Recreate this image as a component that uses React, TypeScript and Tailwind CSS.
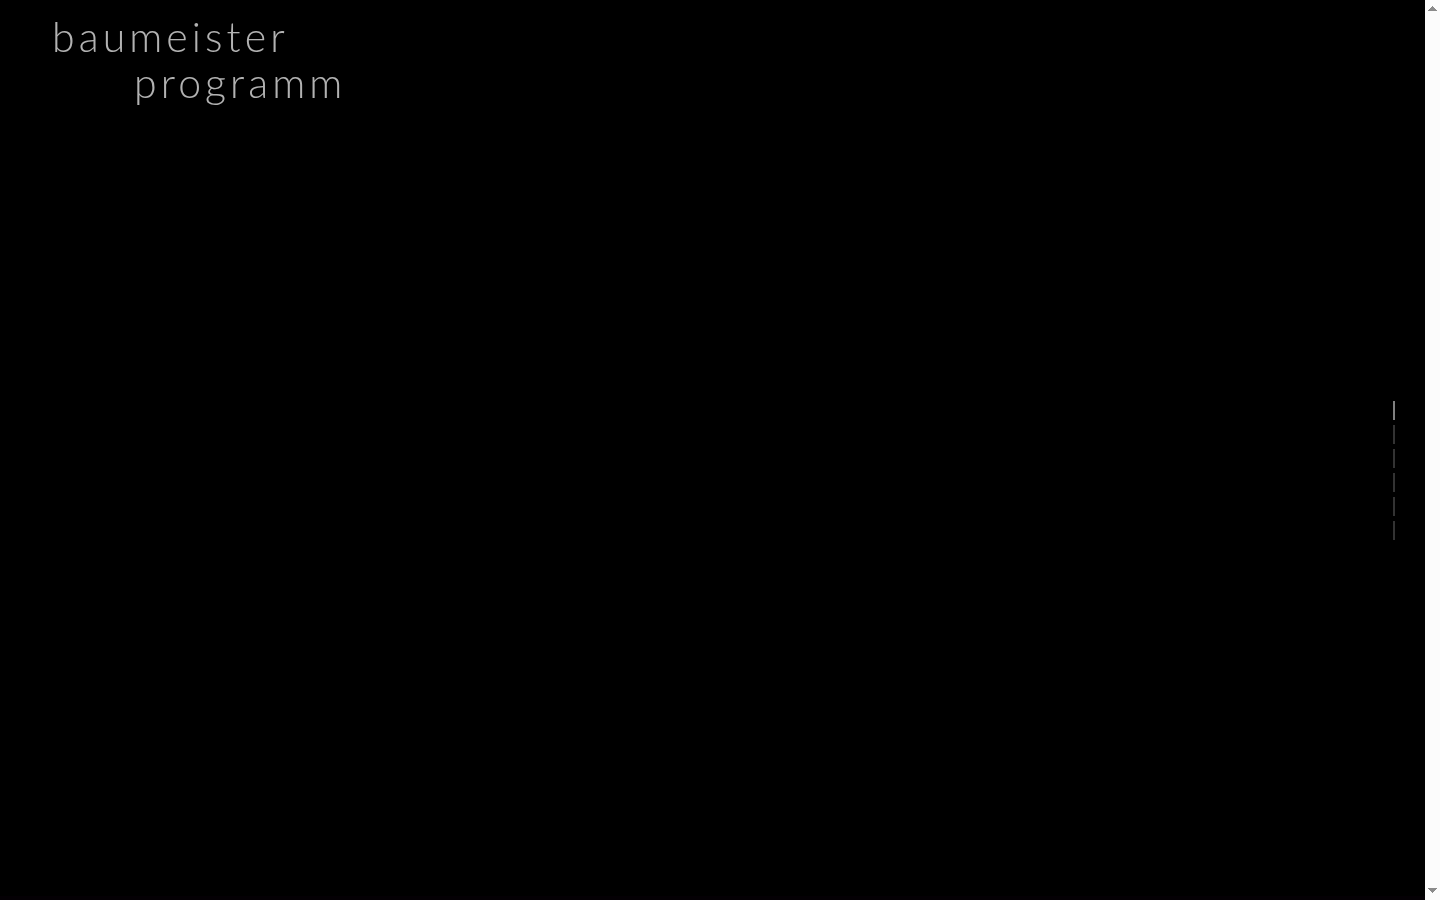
import { useState } from "react";
import clsx from "clsx";

const sections = ["Start", "Programm", "Projekte", "Leistungen", "Team", "Kontakt"];

function ScrollTrack() {
  return (
    <div aria-hidden="true" className="flex w-[15px] shrink-0 flex-col items-center justify-between bg-[#fcfcfc] pt-1.5 pb-[7px]">
      <svg width="9" height="5" viewBox="0 0 9 5" shapeRendering="crispEdges" className="fill-[#8b8b8b]">
        <path d="M4 0h1v1h1v1h1v1h1v1h1v1H0V4h1V3h1V2h1V1h1z" />
      </svg>
      <svg width="9" height="5" viewBox="0 0 9 5" shapeRendering="crispEdges" className="fill-[#8b8b8b]">
        <path d="M0 0h9v1H8v1H7v1H6v1H5v1H4V4H3V3H2V2H1V1H0z" />
      </svg>
    </div>
  );
}

export default function App() {
  const [active, setActive] = useState(0);

  return (
    <div className="flex min-h-screen bg-black">
      <main className="flex flex-1 justify-between border-b-4 border-[#040004]">
        <h1 className="pt-3.5 pl-[52px] font-['Lato','Open_Sans',sans-serif] text-[41px] leading-[46px] font-light tracking-widest text-white opacity-70 will-change-[opacity]">
          <span className="block">baumeister</span>
          <span className="block pl-[82px]">programm</span>
        </h1>

        <nav aria-label="Abschnitte" className="flex flex-col justify-center gap-[5px] pt-11 pr-[30px]">
          {sections.map((name, i) => (
            <button
              key={name}
              type="button"
              aria-label={name}
              aria-current={i === active}
              onClick={() => setActive(i)}
              className={clsx("h-[19px] w-0.5", i === active ? "bg-[#808080]" : "bg-[#333333]")}
            />
          ))}
        </nav>
      </main>
      <ScrollTrack />
    </div>
  );
}
